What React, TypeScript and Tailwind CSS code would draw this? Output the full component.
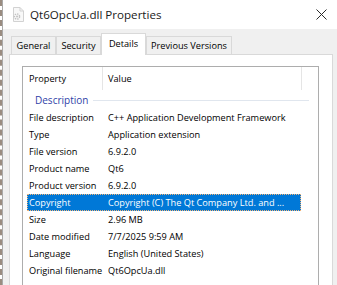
const rows: [string, string][] = [
  ["File description", "C++ Application Development Framework"],
  ["Type", "Application extension"],
  ["File version", "6.9.2.0"],
  ["Product name", "Qt6"],
  ["Product version", "6.9.2.0"],
  ["Copyright", "Copyright (C) The Qt Company Ltd. and ..."],
  ["Size", "2.96 MB"],
  ["Date modified", "7/7/2025 9:59 AM"],
  ["Language", "English (United States)"],
  ["Original filename", "Qt6OpcUa.dll"],
];

function DllIcon() {
  return (
    <svg width="13" height="15" viewBox="0 0 13 15" className="opacity-60">
      <path d="M1.5 0.5h6.5l3.5 3.5v10.5h-10z" fill="#f4f4f4" stroke="#b5b5b5" />
      <path d="M8 0.5v3.5h3.5" fill="none" stroke="#b5b5b5" />
      <circle cx="5" cy="9.5" r="2.6" fill="none" stroke="#9a9a9a" strokeWidth="1.4" strokeDasharray="1.4 1" />
      <circle cx="5" cy="9.5" r="1" fill="#9a9a9a" />
    </svg>
  );
}

function Tab({ label, active, w }: { label: string; active?: boolean; w: string }) {
  if (active) {
    return (
      <div
        className={`${w} relative z-10 -mb-px flex h-[22px] items-start justify-center border border-b-0 border-[#d9d9d9] bg-white pt-[3px]`}
      >
        {label}
      </div>
    );
  }
  return (
    <div
      className={`${w} flex h-[18px] items-center justify-center border border-b-0 border-[#d9d9d9] bg-[#f0f0f0]`}
    >
      {label}
    </div>
  );
}

export default function App() {
  return (
    <div className="flex h-[285px] w-[337px] overflow-hidden bg-white font-['Segoe_UI','Open_Sans',sans-serif] text-[9.2px] text-black">
      <div className="w-[2px] border-l-2 border-dashed border-[#9a8c80]" />
      <div className="flex flex-1 flex-col border-l border-[#a9a9a9]">
        {/* title bar */}
        <div className="flex h-[29px] shrink-0 items-center bg-white">
          <div className="ml-[9px] flex">
            <DllIcon />
          </div>
          <span className="ml-[5px] text-[11.6px] text-[#1a1a1a]">Qt6OpcUa.dll Properties</span>
          <svg width="11" height="11" viewBox="0 0 11 11" className="ml-auto mr-[10px]">
            <path d="M0.5 0.5l10 10M10.5 0.5l-10 10" stroke="#2a2a2a" strokeWidth="1" />
          </svg>
        </div>

        {/* client area */}
        <div className="flex flex-1 flex-col bg-[#f0f0f0] pl-[6px] pr-[4px]">
          <div className="ml-[2px] mt-[4px] flex items-end">
            <Tab label="General" w="w-[45px]" />
            <Tab label="Security" w="w-[45px]" />
            <Tab label="Details" w="w-[45px]" active />
            <Tab label="Previous Versions" w="w-[86px]" />
          </div>

          <div className="flex flex-1 flex-col border border-b-0 border-[#d9d9d9] bg-white">
            <div className="ml-[12px] mr-[13px] mt-[11px] flex flex-1 flex-col border border-b-0 border-[#adadad]">
              {/* header */}
              <div className="flex h-[23px] shrink-0 items-center">
                <div className="flex h-full w-[80px] items-center border-r border-[#e5e5e5] pl-[6px]">Property</div>
                <div className="flex h-full w-[199px] items-center border-r border-[#e5e5e5] pl-[5px]">Value</div>
              </div>

              {/* group */}
              <div className="mt-px flex h-[18px] items-center pl-[12px]">
                <span className="text-[10px] text-[#2f42a8]">Description</span>
                <div className="ml-[5px] mr-[9px] h-px flex-1 bg-[#e0e6ee]" />
              </div>

              {rows.map(([k, v]) => {
                const sel = k === "Copyright";
                return (
                  <div
                    key={k}
                    className={
                      sel
                        ? "ml-[4px] flex h-[17px] w-[274px] items-center whitespace-nowrap bg-[#0078d7] text-white outline-1 -outline-offset-1 outline-dotted outline-[#f2b478]"
                        : "ml-[4px] flex h-[17px] w-[274px] items-center whitespace-nowrap"
                    }
                  >
                    <span className="w-[75px] shrink-0 pl-[2px]">{k}</span>
                    <span className="pl-[6px]">{v}</span>
                  </div>
                );
              })}
            </div>
          </div>
        </div>
      </div>
    </div>
  );
}
